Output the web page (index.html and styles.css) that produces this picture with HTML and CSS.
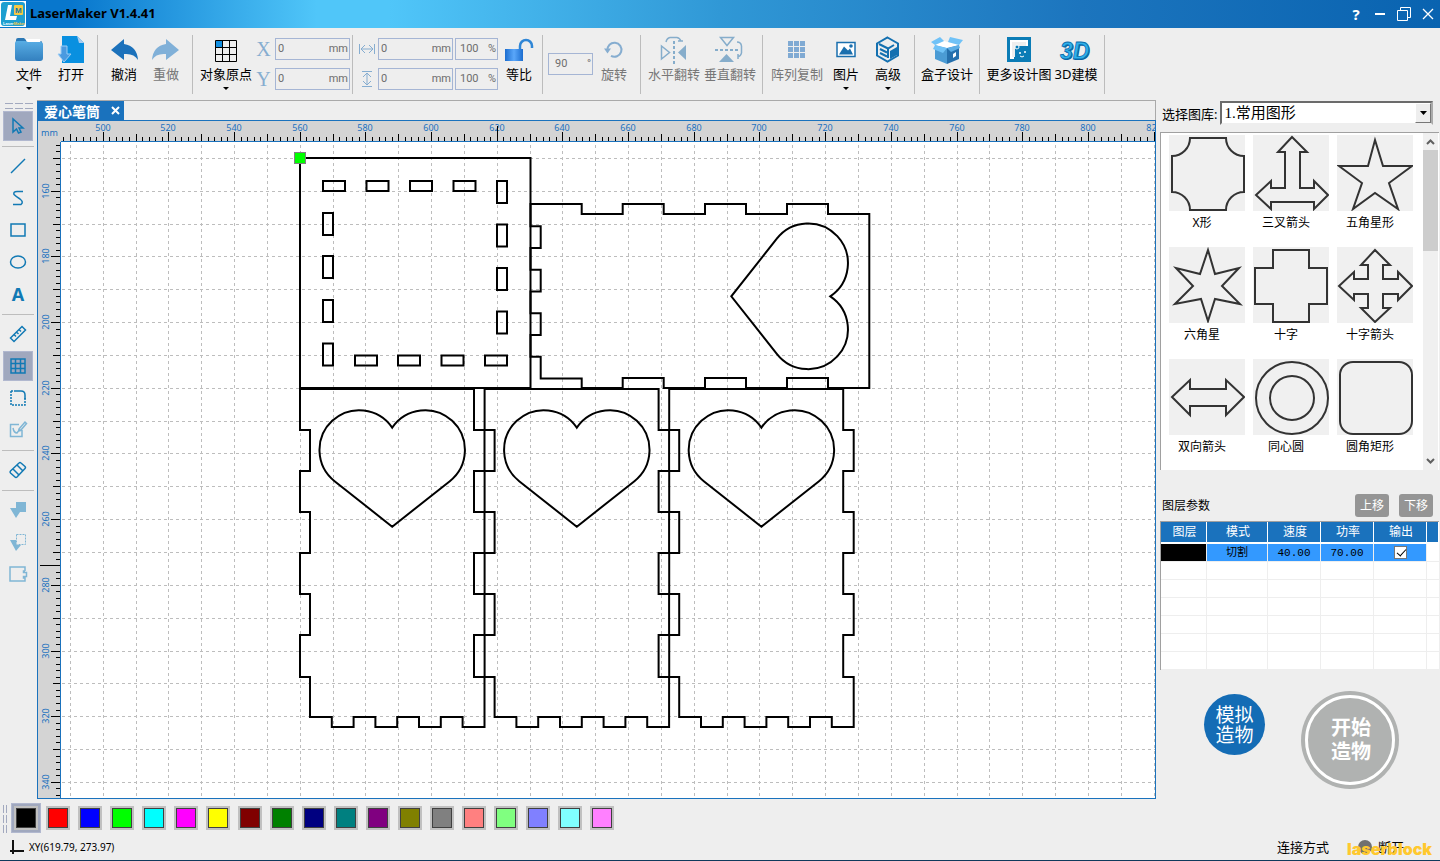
FILE: index.html
```html
<!DOCTYPE html>
<html lang="zh-CN">
<head>
<meta charset="utf-8">
<title>LaserMaker V1.4.41</title>
<link rel="stylesheet" href="styles.css">
</head>
<body>
<header class="titlebar">
  <svg class="logo" width="26" height="26" viewBox="0 0 26 26">
    <rect width="26" height="26" fill="#fff"/>
    <rect x="1" y="1" width="24" height="24" rx="3" fill="#1e9fd0"/>
    <path d="M8 4h4l-2 11h7l-1 4H5z" fill="#fff"/>
    <rect x="14" y="4" width="9" height="10" rx="1" fill="#f6c944"/>
    <text x="15" y="12" font-size="8" class="logo-letter" fill="#1577a5">M</text>
    <text x="3" y="24" font-size="4" class="logo-letter" fill="#fff">Laser<tspan fill="#f6c944">Maker</tspan></text>
  </svg>
  <h1 class="title">LaserMaker V1.4.41</h1>
  <div class="window-buttons">
    <button class="wbtn help" aria-label="帮助">?</button>
    <button class="wbtn" aria-label="最小化"><svg width="14" height="14"><path d="M2 7h10" stroke="#fff" stroke-width="2"/></svg></button>
    <button class="wbtn" aria-label="还原"><svg width="16" height="16" fill="none" stroke="#fff"><path d="M1.500 4.500h10v10h-10zM4.500 4v-2.500h10v10h-2.500"/></svg></button>
    <button class="wbtn" aria-label="关闭"><svg width="14" height="14"><path d="M2 2l10 10M12 2L2 12" stroke="#fff" stroke-width="1.300"/></svg></button>
  </div>
</header>

<div class="toolbar">
  <div class="group g-file">
    <button class="tool"><svg class="ticon" viewBox="0 0 32 28"><defs><linearGradient id="fold" x2="0" y2="1"><stop stop-color="#58ade4"/><stop offset="1" stop-color="#3380bf"/></linearGradient></defs><path d="M3 4q0-2 2-2h6l3 3h14q1 0 1 2v6H3z" fill="#2b78b5"/><path d="M13 3h14l1 6H14z" fill="#fff"/><path d="M2 7q0-2 2-2h8l3 1h12q3 0 3 2v14q0 3-3 3H5q-3 0-3-3z" fill="url(#fold)"/></svg><span>文件</span><i class="caret"></i></button>
    <button class="tool"><svg class="ticon" viewBox="0 0 32 28"><path d="M7 0h15l7 7v20H7z" fill="#0990e0"/><path d="M22 0l7 7h-5z" fill="#a9cdf0"/><path d="M6 10h6v8h4l-7 8-6-8h3z" fill="#4a9ae0" stroke="#9accf5"/></svg><span>打开</span></button>
  </div>
  <div class="group g-undo">
    <button class="tool"><svg class="ticon" viewBox="0 0 32 28"><path d="M3 14L16 3v5q13 2 14 16-4-7-14-6v6z" fill="#1b71bb"/></svg><span>撤消</span></button>
    <button class="tool off"><svg class="ticon" viewBox="0 0 32 28"><path d="M29 14L16 3v5Q3 10 2 24q4-7 14-6v6z" fill="#80b0d8"/></svg><span>重做</span></button>
  </div>
  <div class="group g-origin">
    <button class="tool wide"><svg class="ticon" viewBox="0 0 32 28"><path d="M6 5h7v7H6z" fill="#118ee0"/><path d="M5.500 4.500h21v21h-21zM12.500 4v22M19.500 4v22M5 11.500h22M5 18.500h22" fill="none" stroke="#000"/></svg><span>对象原点</span><i class="caret"></i></button>
    <div class="fields">
      <label class="field"><b class="axis">X</b><span class="box"><input value="0"><em>mm</em></span></label>
      <label class="field"><b class="axis">Y</b><span class="box"><input value="0"><em>mm</em></span></label>
    </div>
  </div>
  <div class="group g-size">
    <div class="fields">
      <div class="field"><svg class="dim" viewBox="0 0 16 16"><path d="M.5 3v10M15.500 3v10M2 8h12M6 4L2 8l4 4M10 4l4 4-4 4"/></svg><span class="box"><input value="0" aria-label="宽度"><em>mm</em></span><span class="box pct"><input value="100" aria-label="宽度比例"><em>%</em></span></div>
      <div class="field"><svg class="dim" viewBox="0 0 16 16"><path d="M3 .5h10M3 15.500h10M8 2v12M4 6l4-4 4 4M4 10l4 4 4-4"/></svg><span class="box"><input value="0" aria-label="高度"><em>mm</em></span><span class="box pct"><input value="100" aria-label="高度比例"><em>%</em></span></div>
    </div>
    <button class="tool"><svg class="ticon" viewBox="0 0 32 28"><defs><linearGradient id="lock"><stop stop-color="#1c6dcf"/><stop offset=".5" stop-color="#5aa7fa"/><stop offset="1" stop-color="#1c6dcf"/></linearGradient></defs><path d="M17 13v-3a6 6 0 0 1 12 0v2" fill="none" stroke="#2f86d6" stroke-width="2.500"/><rect x="2" y="13" width="18" height="12" fill="url(#lock)"/></svg><span>等比</span></button>
  </div>
  <div class="group g-rotate">
    <label class="box angle"><input value="90" aria-label="角度"><em>°</em></label>
    <button class="tool off"><svg class="ticon" viewBox="0 0 32 28"><path d="M9.500 14.500A7 7 0 1 1 13 19.800" fill="none" stroke="#86add0" stroke-width="2"/><path d="M6 12.500h7l-3.500 5z" fill="#86add0"/></svg><span>旋转</span></button>
  </div>
  <div class="group g-flip">
    <button class="tool wide off"><svg class="ticon" viewBox="0 0 32 28"><g fill="none" stroke="#86adcb" stroke-width="1.500"><path d="M3.500 10v13l8-6.500z"/><path d="M16 5v24" stroke-dasharray="3 2" stroke-width="2"/><path d="M8 6q1-4 4-4.500h7q3 .5 4 4M20 5h5"/></g><path d="M28 9v15l-8-7.500z" fill="#86adcb"/></svg><span>水平翻转</span></button>
    <button class="tool wide off"><svg class="ticon" viewBox="0 0 32 28"><g fill="none" stroke="#86adcb" stroke-width="1.500"><path d="M6.500 1.500h13l-6.500 8z"/><path d="M1 14h24" stroke-dasharray="3 2" stroke-width="2"/><path d="M23 6q4 0 4.500 4v7q-.5 3-4 4M24 18v5"/></g><path d="M5 26h15l-7.500-8z" fill="#86adcb"/></svg><span>垂直翻转</span></button>
  </div>
  <div class="group g-more">
    <button class="tool wide off"><svg class="ticon" viewBox="0 0 32 28"><path d="M7 5h5v5H7zM13 5h5v5h-5zM19 5h5v5h-5zM7 11h5v5H7zM13 11h5v5h-5zM19 11h5v5h-5zM7 17h5v5H7zM13 17h5v5h-5zM19 17h5v5h-5z" fill="#80aad3"/></svg><span>阵列复制</span></button>
    <button class="tool"><svg class="ticon" viewBox="0 0 32 28"><rect x="7" y="6.500" width="18" height="14" fill="#fff" stroke="#1a6fae" stroke-width="1.500"/><path d="M9 18.500l5-8 4 4 2-2 3 6z" fill="#1a6fae"/><circle cx="21" cy="10" r="1.800" fill="#1a6fae"/></svg><span>图片</span><i class="caret"></i></button>
    <button class="tool"><svg class="ticon" viewBox="0 0 32 28"><path d="M15.500 1.500l10.500 6v12l-10.500 6L5 19.500v-12zM7 8l9 4.500L22 9M16 12.500V22M8 13l7 3.500M8 17l7 3.500" fill="none" stroke="#1470b0" stroke-width="2"/><path d="M18 15l7-4v8l-7 4z" fill="#1470b0"/></svg><span>高级</span><i class="caret"></i></button>
  </div>
  <div class="group g-box">
    <button class="tool wide"><svg class="ticon" viewBox="0 0 32 28"><path d="M4 9l12 3v16L4 23z" fill="#4b9bd4"/><path d="M28 9l-12 3v16l12-5z" fill="#2670ad"/><path d="M4 9l9-4 15 4-12 3z" fill="#fff"/><path d="M4 9L0 6l9-5 4 4zM16 12l-4 5-10-4 2-4zM28 9l4-5-13-3-2 5z" fill="#70c2f7"/><path d="M16 12l4 4 9-4-1-3z" fill="#5caee6"/><path d="M22 18l3-2v4l-3 2z" fill="#fff"/></svg><span>盒子设计</span></button>
  </div>
  <div class="group g-design">
    <button class="tool design"><svg class="ticon" viewBox="0 0 32 28"><rect x="4" y="1" width="24" height="25" fill="#0b7cb6"/><path d="M7 4h18v6h-2V6H9v15h2v2H7z" fill="#fff"/><path d="M9 6h14v4H12v11H9z" fill="#eee"/><circle cx="14" cy="11" r="2" fill="#0b7cb6" stroke="#fff"/><path d="M14 14q4-4 9-1 2 4 0 8l-3 2h-5q-3-4-1-9z" fill="#0b7cb6"/><circle cx="17" cy="17" r="1" fill="#fff"/><circle cx="22" cy="16" r="1" fill="#fff"/><path d="M17 20q2 2 4 0" fill="none" stroke="#fff"/></svg><span>更多设计图</span></button>
    <button class="tool"><svg class="ticon" viewBox="0 0 32 28"><text x="1" y="24" class="three-d" fill="#0a5f9e">3D</text><text x="0" y="23" class="three-d" fill="#2fb0ea" stroke="#0b6fae" stroke-width=".8">3D</text></svg><span>3D建模</span></button>
  </div>
</div>

<main class="main">
  <nav class="tools" aria-label="绘图工具">
    <div class="grip"><i></i><i></i><i></i><i></i><i></i><i></i></div>
    <button class="side on" aria-label="选择"><svg viewBox="0 0 20 20"><path d="M5 3v13l3.500-3 2 4 2.500-1-2-4h4z"/></svg></button>
    <hr>
    <button class="side" aria-label="直线"><svg viewBox="0 0 20 20"><path d="M3 17L17 3"/></svg></button>
    <button class="side" aria-label="曲线"><svg viewBox="0 0 20 20"><path d="M15 3.500H9q-4 0-3 3 2 2 6 4.500 4 3 1 5.500H5"/></svg></button>
    <button class="side" aria-label="矩形"><svg viewBox="0 0 20 20"><rect x="3" y="4" width="14" height="12"/></svg></button>
    <button class="side" aria-label="椭圆"><svg viewBox="0 0 20 20"><ellipse cx="10" cy="10" rx="7.500" ry="6"/></svg></button>
    <button class="side letter" aria-label="文字">A</button>
    <hr>
    <button class="side" aria-label="测量"><svg viewBox="0 0 20 20"><path d="M2.500 14L14 2.500l3.500 3.500L6 17.500zM6.500 11l1.500 1.500M9 8.500l1.500 1.500M11.500 6l1.500 1.500"/></svg></button>
    <button class="side on" aria-label="网格"><svg viewBox="0 0 20 20"><path d="M3 3h14v14H3zM7.500 3v14M12.500 3v14M3 7.500h14M3 12.500h14"/></svg></button>
    <button class="side" aria-label="圆角"><svg viewBox="0 0 20 20"><path d="M8 3h5q4 0 4 4v4"/><path d="M3 3v14h14V10M3 3h6" stroke-dasharray="2 1"/></svg></button>
    <button class="side off" aria-label="编辑"><svg viewBox="0 0 20 20"><path d="M14 10v6.500H2.500v-12H11M5 8q1 5 4 5l3-4M11 9l6-7 1.500 1.500-6 7-2 .5z"/></svg></button>
    <hr>
    <button class="side" aria-label="橡皮"><svg viewBox="0 0 20 20"><path d="M2.500 11L11 3q1-1 2 0l4 3.500q1 1 0 2L9 17q-1 1-2 0l-4.500-4q-1-1 0-2zM5 9l6 6M9 5l6 6"/></svg></button>
    <hr>
    <button class="side off" aria-label="合并"><svg viewBox="0 0 20 20"><path d="M8 2h10v10h-6l-4 6-6-10h6z" class="solid"/></svg></button>
    <button class="side off" aria-label="相减"><svg viewBox="0 0 20 20"><path d="M2 8h6v5h5l-5 6z" class="solid"/><path d="M8.500 2.500h9v10h-9z" stroke-dasharray="2 1" stroke-width="1"/></svg></button>
    <button class="side off" aria-label="轮廓"><svg viewBox="0 0 20 20"><path d="M17 7V3H2v14h15v-4M17 7h-1.500v1.500h3v4h-3V14H17"/></svg></button>
  </nav>

  <section class="workspace">
    <div class="tabs"><button class="tab">爱心笔筒<svg width="9" height="9" viewBox="0 0 9 9"><path d="M1 1l7 7M8 1L1 8" stroke="#fff" stroke-width="2"/></svg></button></div>
    <div class="sheet" id="sheet">
      <div class="corner">mm</div>
      <svg class="ruler-x" id="rulerX"></svg>
      <svg class="ruler-y" id="rulerY"></svg>
      <svg class="canvas">
        <g transform="translate(-61 -142)">
          <g id="grid" class="gridlines"></g>
          <g class="cut">
            <path d="M300 158H530.500V388H300z"/>
            <path d="M323 181h22v10h-22zM366.500 181h22v10h-22zM410 181h22v10h-22zM453.500 181h22v10h-22z"/>
            <path d="M355 355.500h22v10h-22zM398 355.500h22v10h-22zM441.500 355.500h22v10h-22zM485 355.500h22v10h-22z"/>
            <path d="M323 213h10v22h-10zM323 256h10v22h-10zM323 300h10v22h-10zM323 343.500h10v22h-10z"/>
            <path d="M497 181h10v22h-10zM497 224.500h10v22h-10zM497 268h10v22h-10zM497 311.500h10v22h-10z"/>
            <path d="M530.500 204H581.700V214H622.700V204H663.700V214H705V204H746V214H787V204H828V214H869.300V388H828V378H787V388H746V378H705V388H663.700V378H622.700V388H581.700V378.500H540.700V356.700H530.500V335H540.700V313.300H530.500V291.500H540.700V269.700H530.500V248H540.700V226.300H530.500z"/>
            <path d="M776.800 238.700A39.800 39.800 0 1 1 830.300 296.300A39.800 39.800 0 1 1 776.800 353.900L731.300 296.300z"/>
            <g id="panel">
              <path d="M300 389V430H310V471H300V512H310V553H300V594H310V635H300V677H310V717H331.800V727H353.600V717H375.400V727H397.200V717H419V727H440.800V717H462.600V727H484.500V677H474V635H484.500V594H474V553H484.500V512H474V471H484.500V430H474V389z"/>
              <path d="M334.600 481.200A39.800 39.800 0 1 1 392.200 427.600A39.800 39.800 0 1 1 449.800 481.200L392.200 526.700z"/>
            </g>
            <use href="#panel" x="184.600"/>
            <use href="#panel" x="369.200"/>
          </g>
          <rect x="294.500" y="152.500" width="11" height="11" fill="#0f0" stroke="#808080"/>
        </g>
      </svg>
    </div>
  </section>

  <aside class="panel">
    <div class="library-row">
      <label for="library">选择图库:</label>
      <span class="combo"><select id="library"><option>1.常用图形</option></select><i class="drop"><svg width="7" height="4"><path d="M0 0h7L3.500 4z"/></svg></i></span>
    </div>
    <div class="library">
      <div class="shapes" id="shapes"></div>
      <div class="scroll"><svg width="9" height="6" viewBox="0 0 9 6"><path d="M1 5l3.500-3.500L8 5"/></svg><i></i><svg width="9" height="6" viewBox="0 0 9 6"><path d="M1 1l3.500 3.500L8 1"/></svg></div>
    </div>
    <div class="layer-head"><h2>图层参数</h2><button>上移</button><button>下移</button></div>
    <table class="layers">
      <colgroup><col class="c1"><col class="c2"><col class="c3"><col class="c3"><col class="c3"><col></colgroup>
      <thead><tr><th>图层</th><th>模式</th><th>速度</th><th>功率</th><th>输出</th><th></th></tr></thead>
      <tbody>
        <tr class="current"><td class="ink"></td><td>切割</td><td>40.00</td><td>70.00</td><td><input type="checkbox" checked aria-label="输出"></td><td></td></tr>
        <tr><td></td><td></td><td></td><td></td><td></td><td></td></tr>
        <tr><td></td><td></td><td></td><td></td><td></td><td></td></tr>
        <tr><td></td><td></td><td></td><td></td><td></td><td></td></tr>
        <tr><td></td><td></td><td></td><td></td><td></td><td></td></tr>
        <tr><td></td><td></td><td></td><td></td><td></td><td></td></tr>
        <tr><td></td><td></td><td></td><td></td><td></td><td></td></tr>
      </tbody>
    </table>
    <div class="actions">
      <button class="simulate">模拟<br>造物</button>
      <button class="start"><span>开始<br>造物</span></button>
    </div>
  </aside>
</main>

<div class="palette" id="palette"><div class="vgrip"><i></i><i></i><i></i><i></i><i></i><i></i></div></div>

<footer class="status">
  <svg width="16" height="16" viewBox="0 0 16 16"><path d="M4 1v14M1 12h14" stroke="#111" stroke-width="2"/></svg>
  <span class="xy">XY(619.79, 273.97)</span>
  <span class="link">连接方式</span>
  <span class="state"><i class="dot"></i>断开<b class="brand">laserblock</b></span>
</footer>
<script src="app.js"></script>
</body>
</html>
```

FILE: styles.css
```css
* { box-sizing: border-box; }
body {
  margin: 0;
  height: 100vh;
  display: flex;
  flex-direction: column;
  overflow: hidden;
  background: #eee;
  color: #000;
  font: 13px/18px "Noto Sans", "Noto Sans CJK SC", sans-serif;
}
button { border: 0; padding: 0; background: none; font: inherit; color: inherit; }
input { font: inherit; color: inherit; }
h1, h2 { margin: 0; font-size: 13px; }
i, em { font-style: normal; }

/* title bar */
.titlebar {
  flex: none;
  height: 28px;
  display: flex;
  align-items: center;
  background: linear-gradient(90deg, #0877cd 0%, #0877cd 5%, #50c6f9 22%, #50c6f9 27%, #3098d6 50%, #1c75be 75%, #0963b0 100%);
}
.logo { margin-right: 4px; }
.logo-letter { font-family: "Liberation Sans", sans-serif; font-weight: bold; }
.title { flex: 1; font-family: "Noto Sans", sans-serif; font-weight: bold; line-height: 26px; padding-bottom: 2px; }
.window-buttons { display: flex; }
.wbtn { width: 24px; height: 28px; display: flex; align-items: center; justify-content: center; }
.help { color: #fff; font: bold 15px "Noto Sans", sans-serif; }

/* toolbar */
.toolbar { flex: none; height: 72px; display: flex; padding-top: 7px; }
.group { display: flex; height: 59px; border-right: 1px solid #bcbcbc; }
.g-file { padding: 0 5px 0 8px; }
.g-undo { padding: 0 5px; }
.g-origin { padding: 0 2px 0 5px; }
.g-size { padding: 0 2px 0 5px; }
.g-rotate { padding: 0 5px 0 4px; }
.g-flip { padding: 0 4px 0 5px; }
.g-more { padding: 0 5px 0 6px; }
.g-box { padding: 0 4px; }
.g-design { padding: 0 7px 0 3px; }
.tool {
  flex: none;
  width: 42px;
  display: flex;
  flex-direction: column;
  align-items: center;
  padding-top: 1px;
  white-space: nowrap;
}
.tool.wide { width: 56px; }
.tool.design { width: 72px; }
.tool span { line-height: 18px; }
.tool.off { color: #777; }
.ticon { flex: none; width: 32px; height: 28px; margin-bottom: 1px; overflow: visible; }
.caret { border: 3px solid transparent; border-top-color: #000; margin-top: 4px; }
.three-d { font: italic bold 23px "Liberation Sans", sans-serif; }
.fields { display: flex; flex-direction: column; gap: 8px; padding-top: 3px; }
.field { display: flex; gap: 2px; align-items: center; }
.axis { width: 19px; text-align: center; font: 20px/22px "Liberation Serif", serif; color: #86add0; }
.dim { width: 16px; height: 16px; margin: 0 1px; fill: none; stroke: #86add0; }
.box {
  width: 75px;
  height: 22px;
  display: flex;
  align-items: center;
  border: 1px solid #a5b5d4;
  padding: 0 1px 0 2px;
  color: #6d6d6d;
  font: 11px/20px Roboto, sans-serif;
}
.box input { flex: 1; min-width: 0; width: 10px; border: 0; padding: 0; background: none; }
.box em { flex: none; }
.box.pct { width: 43px; padding-left: 4px; }
.box.angle { width: 45px; margin: 18px 0 0 1px; padding-left: 6px; }

/* main area */
.main { flex: 1; min-height: 0; display: flex; }
.tools { flex: none; width: 37px; padding: 3px 3px 0; display: flex; flex-direction: column; gap: 2px; }
.grip { display: grid; grid-template-columns: repeat(3, 8px); gap: 3px 2px; justify-content: center; height: 6px; }
.grip i { height: 1px; background: #a2a9bf; }
.side { width: 30px; height: 30px; flex: none; display: flex; align-items: center; justify-content: center; border: 1px solid transparent; }
.side svg { width: 20px; height: 20px; fill: none; stroke: #1179b4; stroke-width: 1.5; }
.side.on { background: #a0a8be; border-color: #b1b8cf; }
.side.off svg { stroke: #80b6d5; }
.side .solid { fill: #80b6d5; stroke: none; }
.side.letter { color: #1179b4; font: bold 18px/26px "Noto Sans", sans-serif; }
.tools hr { width: 32px; height: 1px; flex: none; margin: 3px 0 2px -1px; border: 0; background: #bdbdbd; }

.workspace { flex: 1; min-width: 0; display: flex; flex-direction: column; border-top: 1px solid #a9a9a9; }
.tabs { height: 19px; display: flex; border-right: 1px solid #a9a9a9; }
.tab { width: 87px; display: flex; align-items: center; justify-content: space-between; padding: 0 4px 0 7px; background: #1a72bd; color: #fff; font: bold 14px/18px "Noto Sans CJK SC", sans-serif; }
.sheet {
  flex: 1;
  min-height: 0;
  display: grid;
  grid-template: 21px minmax(0, 1fr) / 23px minmax(0, 1fr);
  border: 1px solid #1a72bd;
  background: #fff;
}
.corner { background: #d4d4d4; color: #1b71bf; font: 9px/23px "Noto Sans", sans-serif; text-align: center; }
.ruler-x { width: 100%; height: 21px; background: #d4d4d4; border-bottom: 1px solid #1a72bd; }
.ruler-y { width: 23px; height: 100%; background: #d4d4d4; border-right: 1px solid #1a72bd; }
.ruler-x text, .ruler-y text { font: 9px "Noto Sans", sans-serif; fill: #1b71bf; text-anchor: middle; }
.ruler-x path, .ruler-y path { stroke: #000; fill: none; }
.canvas { width: 100%; height: 100%; overflow: hidden; }
.gridlines { stroke: #bdbdbd; stroke-dasharray: 3 3; fill: none; }
.cut { fill: none; stroke: #000; stroke-width: 2; }

/* right panel */
.panel { flex: none; width: 284px; padding: 0 1px 0 4px; }
.library-row { display: flex; align-items: center; height: 32px; gap: 3px; padding: 0 6px 6px 2px; }
.library-row label { padding-top: 2px; white-space: nowrap; }
.combo { flex: 1; display: flex; position: relative; }
.combo select {
  flex: 1;
  height: 24px;
  appearance: none;
  border: 2px solid #6b6b6b;
  border-right-color: #aaa;
  border-bottom-color: #eee;
  border-radius: 0;
  padding: 0 2px;
  background: #fff;
  color: #000;
  font: 15px/18px "Liberation Serif", "Noto Sans CJK SC", sans-serif;
}
.drop { position: absolute; right: 2px; top: 2px; width: 16px; height: 20px; display: flex; align-items: center; justify-content: center; background: #eee; border: 1px solid #777; border-top-color: #fff; border-left-color: #fff; }
.library { height: 338px; display: flex; justify-content: space-between; background: #fff; border: 1px solid #a0a0a0; border-width: 1px 0 0 1px; padding: 0 1px 0 8px; }
.shapes { display: grid; grid-template-columns: repeat(3, 76px); gap: 12px 8px; align-content: start; padding-top: 2px; }
.shape { margin: 0; }
.shape svg { display: block; background: #f0f0f0; fill: none; stroke: #333; stroke-width: 2; }
.shape figcaption { padding-right: 10px; text-align: center; font-size: 12px; line-height: 24px; }
.scroll { width: 15px; background: #f0f0f0; display: flex; flex-direction: column; align-items: center; padding: 6px 0; }
.scroll svg { flex: none; fill: none; stroke: #606060; stroke-width: 2; }
.scroll i { width: 15px; height: 101px; background: #cdcdcd; margin: 5px 0 auto; }
.layer-head { display: flex; align-items: center; gap: 10px; padding: 24px 6px 4px 2px; }
.layer-head h2 { flex: 1; font-weight: normal; font-size: 12px; }
.layer-head button { width: 34px; height: 23px; border-radius: 3px; background: #959595; color: #fff; font-size: 12px; }
.layers { width: 100%; table-layout: fixed; border-collapse: separate; border-spacing: 0; border-top: 1px solid #a0a0a0; border-left: 1px solid #a0a0a0; background: #fff; font: 12px/16px "Liberation Mono", "Noto Sans CJK SC", monospace; }
.c1 { width: 46px; }
.c2 { width: 61px; }
.c3 { width: 53px; }
.layers th { height: 22px; padding: 2px 0 0 2px; background: #1a72bd; color: #fff; font-weight: normal; border-right: 1px solid #fff; border-bottom: 2px solid #fff; }
.layers td { height: 18px; padding: 0; text-align: center; border-right: 1px solid #eee; border-bottom: 1px solid #eee; }
.layers td:last-child { border-right: 0; }
.layers .current td { background: #3399ff; font-size: 11px; }
.layers .current td:last-child { background: #fff; }
.layers .current .ink { background: #000; }
.layers input { display: block; margin: 1px auto; width: 13px; height: 13px; appearance: none; border: 1px solid #777; background: #fff; position: relative; }
.layers input::after { content: ""; position: absolute; left: 4px; top: 0; width: 4px; height: 8px; border: solid #000; border-width: 0 1px 1px 0; transform: rotate(42deg); }
.actions { display: flex; gap: 36px; align-items: flex-start; padding: 21px 0 0 44px; }
.simulate { width: 61px; height: 61px; margin-top: 3px; padding-bottom: 2px; border-radius: 50%; background: #146cb5; color: #fff; font: 19px/20px "Noto Sans CJK SC", sans-serif; }
.start { width: 98px; height: 98px; padding: 4px; border-radius: 50%; background: #b0b2b1; color: #fff; font: bold 20px/24px "Noto Sans CJK SC", sans-serif; }
.start span { height: 90px; display: flex; align-items: center; justify-content: center; border: 3px solid #fff; border-radius: 50%; padding: 0 0 2px 2px; }

/* palette and status */
.palette { flex: none; height: 38px; display: flex; align-items: flex-start; gap: 2px; padding: 4px 3px; }
.vgrip { display: grid; grid-template-columns: 1px 1px; gap: 2px 2px; width: 6px; margin-top: 2px; }
.vgrip i { height: 8px; background: #a2a9bf; }
.swatch { width: 30px; height: 30px; flex: none; display: flex; align-items: center; justify-content: center; }
.swatch.on { background: #a0a8be; border: 1px solid #b1b8cf; }
.swatch i { width: 20px; height: 20px; border: 1px solid #404040; box-shadow: 0 0 0 2px #c0c0c0; }
.status { flex: none; height: 24px; display: flex; align-items: center; padding: 0 36px 3px 9px; border-bottom: 1px solid #0f3a5c; }
.xy { flex: 1; padding-left: 4px; font-size: 10px; }
.link { margin-right: 29px; }
.state { position: relative; display: flex; align-items: center; gap: 6px; }
.dot { width: 14px; height: 14px; border-radius: 50%; background: #707070; }
.brand { position: absolute; left: -11px; top: 2px; color: #ffc82e; font: 900 16px/18px Inter, sans-serif; }
```

FILE: app.js
```js
const PX_PER_MM = 3.284;
const xAt = mm => 300.2 + (mm - 560) * PX_PER_MM;
const yAt = mm => 158.4 + (mm - 150) * PX_PER_MM;
const snap = v => Math.floor(v) + 0.5;
const sheet = document.getElementById('sheet').getBoundingClientRect();

let grid = '';
for (let mm = 490; xAt(mm) < sheet.right; mm += 10) grid += `M${snap(xAt(mm))} 145V${sheet.bottom}`;
for (let mm = 150; yAt(mm) < sheet.bottom; mm += 10) grid += `M62 ${snap(yAt(mm))}H${sheet.right}`;
document.getElementById('grid').innerHTML = `<path d="${grid}"/>`;

const tickLength = mm => (mm % 20 === 0 ? 9 : mm % 10 === 0 ? 7 : 4);
let ticksX = '', labelsX = '';
for (let mm = 488; xAt(mm) < sheet.right + 4; mm += 2) {
  const x = snap(xAt(mm)) - 61;
  ticksX += `M${x} 20v-${tickLength(mm)}`;
  if (mm % 20 === 0) labelsX += `<text x="${Math.floor(x)}" y="10">${mm}</text>`;
}
document.getElementById('rulerX').innerHTML =
  `<path d="${ticksX}"/>${labelsX}<path d="M436.500 5v15"/>`;

let ticksY = '', labelsY = '';
for (let mm = 146; yAt(mm) < sheet.bottom; mm += 2) {
  const y = snap(yAt(mm)) - 142;
  ticksY += `M22 ${y}h-${tickLength(mm)}`;
  if (mm % 20 === 0) labelsY += `<text transform="translate(11 ${Math.floor(y)}) rotate(-90)">${mm}</text>`;
}
document.getElementById('rulerY').innerHTML =
  `<path d="${ticksY}"/>${labelsY}<path d="M2 423.500h16"/>`;

const shapes = [
  ['X形', '<path d="M21 3H57A18 18 0 0 0 75 21V57A18 18 0 0 0 57 75H21A18 18 0 0 0 3 57V21A18 18 0 0 0 21 3z"/>'],
  ['三叉箭头', '<path d="M39 2L54 17H47V53H61V46L75 60 61 74V67H18V74L3 60 18 46V53H32V17H25z"/>'],
  ['五角星形', '<path d="M38 5L46 31H75L52 48 61 74 38 58 16 74 25 48 2 31H31z"/>'],
  ['六角星', '<path d="M39 3L46 27 70 21 53 39 71 57 46 52 39 74 32 52 6 57 24 39 7 21 31 27z"/>'],
  ['十字', '<path d="M20 3H56V21H74V57H56V75H20V57H2V21H20z"/>'],
  ['十字箭头', '<path d="M38 3L53 18H46V32H61V25L75 39 61 53V47H46V61H53L38 75 24 61H31V47H17V53L2 39 17 25V32H31V18H24z"/>'],
  ['双向箭头', '<path d="M3 38L21 21V30H57V21L75 38 57 56V47H21V56z"/>'],
  ['同心圆', '<circle cx="39" cy="39" r="36"/><circle cx="39" cy="39" r="22"/>'],
  ['圆角矩形', '<rect x="3" y="3" width="72" height="72" rx="13"/>']
];
document.getElementById('shapes').innerHTML = shapes.map(([name, art]) =>
  `<figure class="shape"><svg width="76" height="76">${art}</svg><figcaption>${name}</figcaption></figure>`).join('');

const colours = ['#000', '#f00', '#00f', '#0f0', '#0ff', '#f0f', '#ff0', '#800000', '#008000', '#000080',
  '#008080', '#800080', '#808000', '#808080', '#ff8080', '#80ff80', '#8080ff', '#80ffff', '#ff80ff'];
document.getElementById('palette').insertAdjacentHTML('beforeend', colours.map((c, n) =>
  `<button class="swatch${n ? '' : ' on'}" aria-label="${c}"><i style="background:${c}"></i></button>`).join(''));
```
